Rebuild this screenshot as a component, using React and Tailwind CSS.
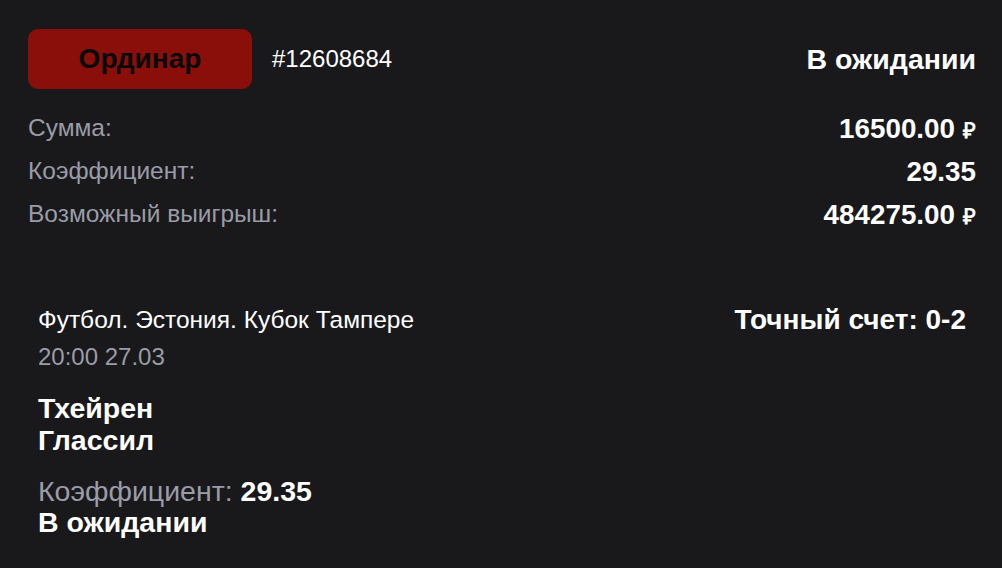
import React from 'react';

const rows = [
    { label: 'Сумма:', value: '16500.00', currency: true },
    { label: 'Коэффициент:', value: '29.35' },
    { label: 'Возможный выигрыш:', value: '484275.00', currency: true },
];

export default function App() {
    return (
        <div className="min-h-screen bg-[#19191b] font-['Liberation_Sans',Arial,sans-serif] pl-[28px] pr-[26px] pt-[29px] pb-6">
            <div className="flex items-center justify-between">
                <div className="flex items-center gap-5">
                    <div className="w-[224px] h-[60px] rounded-[10px] bg-[#8a0f0a] flex items-center justify-center text-[28px] font-bold text-[#080808]">
                        Ординар
                    </div>
                    <span className="text-[24px] text-white">#12608684</span>
                </div>
                <span className="text-[28.5px] font-bold text-white">В ожидании</span>
            </div>

            <div className="mt-[18px]">
                {rows.map((row) => (
                    <div key={row.label} className="flex items-center justify-between h-[43px]">
                        <span className="text-[24.5px] text-[#9a9ca7]">{row.label}</span>
                        <span className="text-[27.8px] font-bold text-white">
                            {row.value}
                            {row.currency && <span className="ml-[8px] text-[22px]">₽</span>}
                        </span>
                    </div>
                ))}
            </div>

            <div className="mt-[68px] px-[10px]">
                <div className="flex items-start justify-between">
                    <div className="flex flex-col">
                        <span className="text-[24.5px] leading-[32px] text-white">Футбол. Эстония. Кубок Тампере</span>
                        <span className="mt-[5px] text-[24px] leading-[32px] text-[#9a9ca7]">20:00 27.03</span>
                    </div>
                    <span className="text-[28px] leading-[32px] font-bold text-white">Точный счет: 0-2</span>
                </div>

                <div className="mt-[19px] flex flex-col text-[28.5px] leading-[32px] font-bold text-white">
                    <span>Тхейрен</span>
                    <span>Глассил</span>
                </div>

                <div className="mt-[20px] flex flex-col text-[28.5px] leading-[31px]">
                    <span>
                        <span className="text-[#9a9ca7]">Коэффициент: </span>
                        <span className="font-bold text-white">29.35</span>
                    </span>
                    <span className="font-bold text-white">В ожидании</span>
                </div>
            </div>
        </div>
    );
}
